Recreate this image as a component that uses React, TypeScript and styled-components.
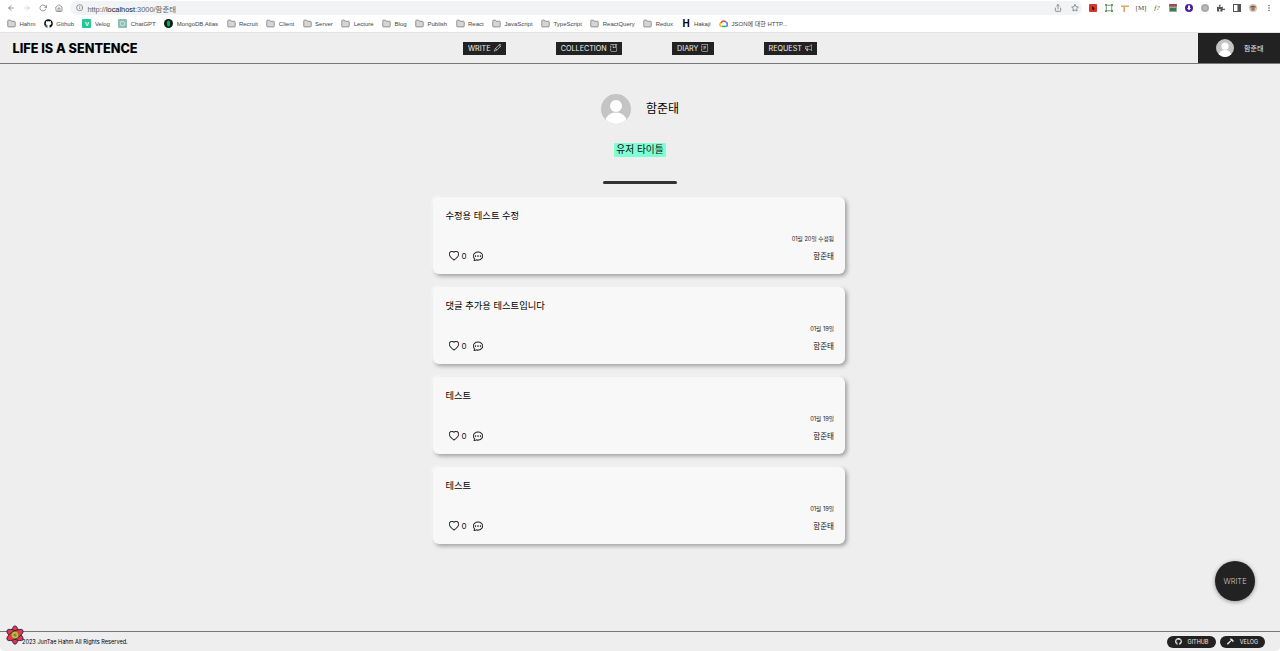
import React from 'react';
import styled, { createGlobalStyle } from 'styled-components';
import { FaGithub, FaPuzzlePiece, FaHammer } from 'react-icons/fa';
import { FiArrowLeft, FiArrowRight, FiRotateCw, FiHome, FiInfo, FiShare, FiStar, FiFolder } from 'react-icons/fi';
import { BsPencil, BsJournalBookmark, BsJournalText, BsMegaphone, BsHeart, BsChatDots, BsThreeDotsVertical } from 'react-icons/bs';

const GlobalStyle = createGlobalStyle`
  html, body { margin: 0; padding: 0; height: 100%; overflow: hidden; background: #fff; }
  body { font-family: "Inter", "Noto Sans CJK KR", sans-serif; color: #111; }
  #root { height: 100%; }
`;

const Page = styled.div`
  display: flex;
  flex-direction: column;
  height: 651px;
  position: relative;
  background: #eee;
  border-radius: 0 0 5px 5px;
  overflow: hidden;
`;

const BrowserBar = styled.div`
  display: flex;
  align-items: center;
  height: 15px;
  padding: 1px 0 0 7px;
  box-sizing: border-box;
  background: #fff;
  color: #5f6368;
`;

const NavIcons = styled.div`
  display: flex;
  align-items: center;
  gap: 8px;
  font-size: 8px;
  width: 63px;
  flex: none;
  svg:nth-child(2) { color: #c4c6c9; }
`;

const Address = styled.div`
  flex: 1;
  height: 14px;
  display: flex;
  align-items: center;
  justify-content: space-between;
  background: #f1f3f4;
  border-radius: 7px;
  padding: 0 3px 0 6px;
  color: #5f6368;
  font-size: 7.4px;
`;

const AddressText = styled.div`
  display: flex;
  align-items: center;
  gap: 4px;
  font-family: "Liberation Sans", "Noto Sans CJK KR", sans-serif;
  b { font-weight: 400; color: #202124; }
`;

const AddressIcons = styled.div`
  display: flex;
  gap: 9px;
  font-size: 8px;
`;

const Extensions = styled.div`
  display: flex;
  align-items: center;
  gap: 8px;
  width: 198px;
  flex: none;
  box-sizing: border-box;
  padding-left: 7px;
  color: #555;
`;

const ExtIcon = styled.svg`
  display: block;
  flex: none;
  width: 8px;
  height: 8px;
`;

const ExtText = styled.span`
  display: flex;
  justify-content: center;
  flex: none;
  width: 8px;
  font-family: "Liberation Serif", serif;
  font-size: 7px;
  line-height: 8px;
  color: #444;
  white-space: nowrap;
`;

const ExtGlyph = styled.span`
  display: flex;
  flex: none;
  width: 8px;
  justify-content: center;
  font-size: 8px;
`;

const Bookmarks = styled.div`
  display: flex;
  align-items: center;
  height: 18px;
  gap: 8.5px;
  padding: 0 0 0 7px;
  background: #fff;
  border-bottom: 1px solid #e3e3e3;
  box-sizing: border-box;
  font-family: "Liberation Sans", "Noto Sans CJK KR", sans-serif;
  font-size: 6px;
  color: #444;
`;

const Bookmark = styled.span`
  display: flex;
  align-items: center;
  gap: 3.4px;
  white-space: nowrap;
  svg { font-size: 9px; color: #777; }
`;

const FolderIcon = styled(FiFolder)`
  fill: #d6d6d6;
`;

const Favicon = styled.span<{ $color: string; $text?: string; $size?: number }>`
  display: flex;
  align-items: center;
  justify-content: center;
  width: 9px;
  height: 9px;
  border-radius: 1px;
  background: ${(p) => p.$color};
  color: ${(p) => p.$text || '#fff'};
  font-size: ${(p) => p.$size || 6}px;
  font-weight: 700;
`;

const Header = styled.header`
  display: flex;
  align-items: stretch;
  height: 31px;
  flex: none;
  background: #eee;
  border-bottom: 1px solid #777;
  box-sizing: border-box;
`;

const Logo = styled.h1`
  width: 429px;
  flex: none;
  box-sizing: border-box;
  margin: 0;
  padding-left: 12.5px;
  align-self: center;
  font-size: 12.7px;
  font-weight: 800;
  color: #000;
  white-space: nowrap;
`;

const Nav = styled.nav`
  display: flex;
  align-items: center;
  gap: 50px;
  flex: 1;
  padding-left: 34px;
`;

const NavButton = styled.a<{ $width: number }>`
  display: flex;
  align-items: center;
  justify-content: center;
  gap: 3px;
  width: ${(p) => p.$width}px;
  height: 13px;
  background: #222;
  color: #eee;
  font-size: 7.2px;
  svg { font-size: 7.5px; }
`;

const UserBox = styled.div`
  display: flex;
  align-items: center;
  gap: 10px;
  width: 82px;
  box-sizing: border-box;
  padding-left: 18px;
  background: #222;
  color: #eee;
  font-size: 7px;
`;

const AvatarCircle = styled.svg<{ $size: number }>`
  display: block;
  flex: none;
  width: ${(p) => p.$size}px;
  height: ${(p) => p.$size}px;
  border-radius: 50%;
`;

const Main = styled.main`
  flex: 1;
  display: flex;
  flex-direction: column;
  align-items: center;
  min-height: 0;
`;

const Profile = styled.div`
  display: flex;
  align-items: center;
  gap: 15px;
  margin-top: 30px;
`;

const ProfileName = styled.span`
  padding-bottom: 3px;
  font-size: 12px;
  color: #000;
`;

const UserTitle = styled.div`
  margin-top: 19px;
  height: 14px;
  line-height: 14px;
  padding: 0 2px;
  background: #7fffd4;
  font-size: 9.7px;
`;

const Divider = styled.hr`
  width: 74px;
  height: 3px;
  margin: 24px 0 13px;
  border: 0;
  border-radius: 2px;
  background: #333;
`;

const CardList = styled.div`
  display: flex;
  flex-direction: column;
  gap: 13px;
  width: 412px;
  margin-right: 2px;
`;

const Card = styled.article`
  display: flex;
  flex-direction: column;
  height: 77px;
  box-sizing: border-box;
  padding: 12px 11px 0 12.5px;
  background: #f8f8f8;
  border-radius: 6px;
  box-shadow: 2px 2px 4px rgba(0, 0, 0, 0.35), -1px -1px 3px #fff;
`;

const CardTitle = styled.div`
  font-size: 9.3px;
  line-height: 14px;
  color: #000;
`;

const CardDate = styled.div`
  margin-top: 11px;
  text-align: right;
  font-size: 5.7px;
  line-height: 10px;
  color: #222;
`;

const CardFooter = styled.div`
  display: flex;
  align-items: center;
  justify-content: space-between;
  margin-top: 5px;
  padding-left: 3px;
  height: 14px;
`;

const Stats = styled.div`
  display: flex;
  align-items: center;
  font-size: 8px;
  span { margin: 0 6px 0 3px; }
  svg { font-size: 10px; color: #000; stroke: #000; stroke-width: 0.4; }
`;

const Author = styled.div`
  padding-bottom: 1px;
  font-size: 7.5px;
  color: #111;
`;

const Footer = styled.footer`
  display: flex;
  align-items: center;
  justify-content: space-between;
  height: 20px;
  flex: none;
  box-sizing: border-box;
  padding: 0 15px 0 22px;
  border-top: 1px solid #777;
  background: #eee;
  font-size: 5.6px;
  color: #000;
`;

const FooterLinks = styled.div`
  display: flex;
  gap: 4px;
`;

const FooterLink = styled.a<{ $width: number }>`
  display: flex;
  align-items: center;
  justify-content: center;
  gap: 6px;
  width: ${(p) => p.$width}px;
  height: 12px;
  border-radius: 6px;
  background: #222;
  color: #eee;
  font-size: 5.5px;
  svg { font-size: 7px; }
`;

const WriteFab = styled.button`
  position: absolute;
  right: 25px;
  bottom: 50px;
  width: 40px;
  height: 40px;
  padding: 0;
  border: 0;
  border-radius: 50%;
  background: #222;
  color: #ccc;
  font-family: inherit;
  font-size: 7.5px;
  font-weight: 300;
  box-shadow: 0 1px 4px rgba(0, 0, 0, 0.4);
`;

const ReactBadge = styled.svg`
  position: absolute;
  left: 5px;
  bottom: 6px;
  width: 20px;
  height: 20px;
`;

const Avatar = ({ size }: { size: number }) => (
  <AvatarCircle $size={size} viewBox="0 0 30 30">
    <rect width="30" height="30" fill="#c4c4c4" />
    <circle cx="15" cy="12" r="6" fill="#fff" />
    <ellipse cx="15" cy="27" rx="10.5" ry="8.5" fill="#fff" />
  </AvatarCircle>
);

const folders = ['Recruit', 'Client', 'Server', 'Lecture', 'Blog', 'Publish', 'React', 'JavaScript', 'TypeScript', 'ReactQuery', 'Redux'];

const posts = [
  { title: '수정용 테스트 수정', date: '01월 20일 수정됨' },
  { title: '댓글 추가용 테스트입니다', date: '01월 19일' },
  { title: '테스트', date: '01월 19일' },
  { title: '테스트', date: '01월 19일' },
];

export default function App() {
  return (
    <Page>
      <GlobalStyle />
      <BrowserBar>
        <NavIcons>
          <FiArrowLeft />
          <FiArrowRight />
          <FiRotateCw />
          <FiHome />
        </NavIcons>
        <Address>
          <AddressText>
            <FiInfo />
            <span>http://<b>localhost</b>:3000/함준태</span>
          </AddressText>
          <AddressIcons>
            <FiShare />
            <FiStar />
          </AddressIcons>
        </Address>
        <Extensions>
          <ExtIcon viewBox="0 0 8 8">
            <rect width="8" height="8" rx="1" fill="#d9362b" />
            <path d="M3 2l3 2.5-1.3.3.7 1.5-.8.3-.7-1.5-.9.8z" fill="#401010" />
          </ExtIcon>
          <ExtIcon viewBox="0 0 8 8">
            <rect x="1.2" y="1.2" width="5.6" height="5.6" fill="none" stroke="#666" strokeWidth="0.7" />
            <path d="M0 0h2v2H0zM6 0h2v2H6zM0 6h2v2H0zM6 6h2v2H6z" fill="#4caf50" />
          </ExtIcon>
          <ExtIcon viewBox="0 0 8 8">
            <path d="M0 1.5h8v1.6H4V8H2.4V3.1H0z" fill="#e2a566" />
          </ExtIcon>
          <ExtText>[M]</ExtText>
          <ExtText><i>f?</i></ExtText>
          <ExtIcon viewBox="0 0 8 8">
            <rect width="8" height="8" rx="1" fill="#8fae96" />
            <rect width="8" height="2.6" rx="1" fill="#a8474a" />
            <rect x="1" y="4" width="6" height="3" fill="#3c7a55" />
          </ExtIcon>
          <ExtIcon viewBox="0 0 8 8">
            <circle cx="4" cy="4" r="4" fill="#4a1f9e" />
            <path d="M3 1.5h2v2.6h1L4 6.6 2 4.1h1z" fill="#fff" />
          </ExtIcon>
          <ExtIcon viewBox="0 0 8 8">
            <circle cx="4" cy="4" r="4" fill="#aaa" />
            <circle cx="4" cy="4" r="1.8" fill="#bdbdbd" />
          </ExtIcon>
          <ExtGlyph><FaPuzzlePiece /></ExtGlyph>
          <ExtIcon viewBox="0 0 8 8">
            <rect x="0.5" y="0.5" width="7" height="7" fill="none" stroke="#555" />
            <rect x="4.5" y="0.5" width="3" height="7" fill="#555" />
          </ExtIcon>
          <ExtIcon viewBox="0 0 8 8">
            <circle cx="4" cy="4" r="4" fill="#d6c3b0" />
            <path d="M1 3.5C1 1 7 1 7 3.5z" fill="#5a5a70" />
            <circle cx="4" cy="5" r="1.8" fill="#a8734f" />
          </ExtIcon>
          <ExtGlyph><BsThreeDotsVertical /></ExtGlyph>
        </Extensions>
      </BrowserBar>
      <Bookmarks>
        <Bookmark><FolderIcon />Hahm</Bookmark>
        <Bookmark><FaGithub style={{ color: '#111' }} />Github</Bookmark>
        <Bookmark><Favicon $color="#20c997">V</Favicon>Velog</Bookmark>
        <Bookmark>
          <Favicon $color="#8dbfb0">
            <svg viewBox="0 0 9 9" width="7" height="7">
              <circle cx="4.5" cy="4.5" r="2.8" fill="none" stroke="#eef" strokeWidth="1" />
            </svg>
          </Favicon>
          ChatGPT
        </Bookmark>
        <Bookmark>
          <svg viewBox="0 0 9 9" width="9" height="9">
            <circle cx="4.5" cy="4.5" r="4.5" fill="#0a1f1a" />
            <ellipse cx="4.5" cy="4.5" rx="1.6" ry="3" fill="#13aa52" />
          </svg>
          MongoDB Atlas
        </Bookmark>
        {folders.map((name) => (
          <Bookmark key={name}><FolderIcon />{name}</Bookmark>
        ))}
        <Bookmark><Favicon $color="transparent" $text="#000" $size={10}>H</Favicon>Hakaji</Bookmark>
        <Bookmark>
          <svg viewBox="0 0 9 9" width="9" height="9" fill="none" strokeWidth="1.5">
            <path d="M2.6 7.4H6.8" stroke="#34a853" />
            <path d="M2.6 7.4C0.4 7.4 0.2 4.6 2.2 4.1" stroke="#fbbc05" />
            <path d="M2.2 4.1C2.6 1.6 5.6 1.2 6.8 3.2" stroke="#ea4335" />
            <path d="M6.8 3.2C9 3.6 9 7.2 6.8 7.4" stroke="#4285f4" />
          </svg>
          JSON에 대한 HTTP...
        </Bookmark>
      </Bookmarks>
      <Header>
        <Logo>LIFE IS A SENTENCE</Logo>
        <Nav>
          <NavButton $width={43}>WRITE <BsPencil /></NavButton>
          <NavButton $width={66}>COLLECTION <BsJournalBookmark /></NavButton>
          <NavButton $width={42}>DIARY <BsJournalText /></NavButton>
          <NavButton $width={53}>REQUEST <BsMegaphone /></NavButton>
        </Nav>
        <UserBox>
          <Avatar size={18} />
          함준태
        </UserBox>
      </Header>
      <Main>
        <Profile>
          <Avatar size={30} />
          <ProfileName>함준태</ProfileName>
        </Profile>
        <UserTitle>유저 타이틀</UserTitle>
        <Divider />
        <CardList>
          {posts.map((post, i) => (
            <Card key={i}>
              <CardTitle>{post.title}</CardTitle>
              <CardDate>{post.date}</CardDate>
              <CardFooter>
                <Stats>
                  <BsHeart />
                  <span>0</span>
                  <BsChatDots />
                </Stats>
                <Author>함준태</Author>
              </CardFooter>
            </Card>
          ))}
        </CardList>
      </Main>
      <Footer>
        <span>2023 JunTae Hahm All Rights Reserved.</span>
        <FooterLinks>
          <FooterLink $width={49}><FaGithub />GITHUB</FooterLink>
          <FooterLink $width={45}><FaHammer />VELOG</FooterLink>
        </FooterLinks>
      </Footer>
      <WriteFab>WRITE</WriteFab>
      <ReactBadge viewBox="0 0 20 20">
        <g fill="#e8334a" stroke="#1d2440" strokeWidth="0.8">
          <ellipse cx="10" cy="10" rx="9.2" ry="3.8" transform="rotate(90 10 10)" />
          <ellipse cx="10" cy="10" rx="9.2" ry="3.8" transform="rotate(30 10 10)" />
          <ellipse cx="10" cy="10" rx="9.2" ry="3.8" transform="rotate(150 10 10)" />
        </g>
        <circle cx="10" cy="10" r="3.6" fill="#c9b93a" stroke="#2e5d3a" strokeWidth="0.7" strokeDasharray="1 1" />
        <circle cx="10" cy="10" r="1.6" fill="#6f8a3a" />
      </ReactBadge>
    </Page>
  );
}
